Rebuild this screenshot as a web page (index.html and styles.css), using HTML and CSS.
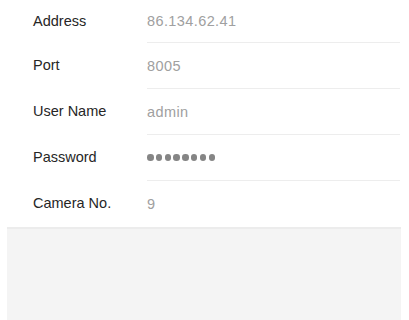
FILE: index.html
```html
<!DOCTYPE html>
<html>
<head>
<meta charset="utf-8">
<link rel="stylesheet" href="styles.css">
</head>
<body>
<div class="form">
  <div class="row">
    <div class="label">Address</div>
    <div class="value">86.134.62.41</div>
  </div>
  <div class="row">
    <div class="label">Port</div>
    <div class="value">8005</div>
  </div>
  <div class="row">
    <div class="label">User Name</div>
    <div class="value">admin</div>
  </div>
  <div class="row">
    <div class="label">Password</div>
    <div class="value">
      <div class="dots">
        <span class="dot"></span><span class="dot"></span><span class="dot"></span><span class="dot"></span>
        <span class="dot"></span><span class="dot"></span><span class="dot"></span><span class="dot"></span>
      </div>
    </div>
  </div>
  <div class="row">
    <div class="label">Camera No.</div>
    <div class="value">9</div>
  </div>
</div>
<div class="panel"></div>
</body>
</html>
```
FILE: styles.css
```css
html, body {
  margin: 0;
  padding: 0;
  background: #ffffff;
  height: 100%;
}
body {
  font-family: "Liberation Sans", Arial, sans-serif;
  display: flex;
  flex-direction: column;
}
.form {
  display: flex;
  flex-direction: column;
}
.row {
  display: flex;
  align-items: stretch;
  padding-left: 33px;
  padding-right: 9px;
}
.label {
  width: 114px;
  flex: none;
  display: flex;
  align-items: center;
  font-size: 14.5px;
  color: #262626;
}
.value {
  flex: 1;
  display: flex;
  align-items: center;
  height: 45px;
  border-top: 1px solid #ededed;
  font-size: 14.5px;
  letter-spacing: 0.4px;
  color: #a0a0a0;
}
.row:first-child .value {
  border-top: none;
  height: 42px;
}
.dots {
  display: flex;
  gap: 2.3px;
}
.dot {
  width: 6.5px;
  height: 6.5px;
  border-radius: 50%;
  background: #858585;
}
.panel {
  flex: 1;
  margin: 1px 8px 0 7px;
  background: #f4f4f4;
  border-top: 2px solid #ececec;
}
```
